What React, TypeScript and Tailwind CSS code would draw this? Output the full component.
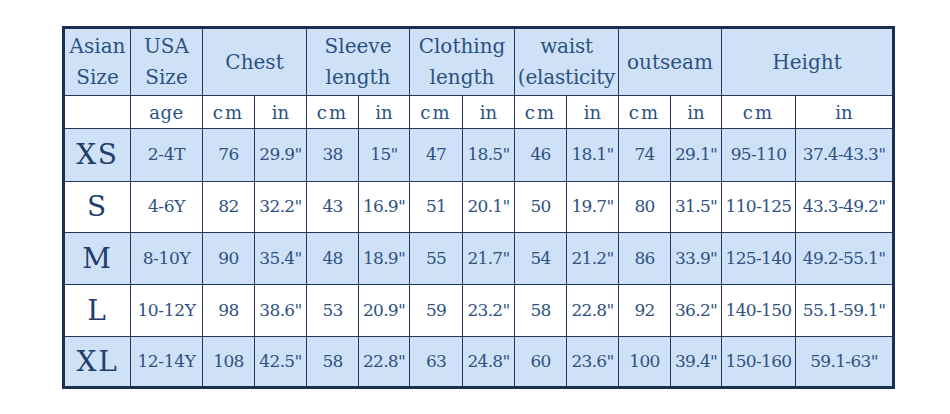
import React from "react"

const widths = [67, 72, 52, 52, 52, 51, 53, 52, 52, 52, 52, 51, 74, 98]

const rows = [
  { size: "XS", age: "2-4T", v: ["76", "29.9\"", "38", "15\"", "47", "18.5\"", "46", "18.1\"", "74", "29.1\"", "95-110", "37.4-43.3\""], h: "h-[53px]" },
  { size: "S", age: "4-6Y", v: ["82", "32.2\"", "43", "16.9\"", "51", "20.1\"", "50", "19.7\"", "80", "31.5\"", "110-125", "43.3-49.2\""], h: "h-[51px]" },
  { size: "M", age: "8-10Y", v: ["90", "35.4\"", "48", "18.9\"", "55", "21.7\"", "54", "21.2\"", "86", "33.9\"", "125-140", "49.2-55.1\""], h: "h-[52px]" },
  { size: "L", age: "10-12Y", v: ["98", "38.6\"", "53", "20.9\"", "59", "23.2\"", "58", "22.8\"", "92", "36.2\"", "140-150", "55.1-59.1\""], h: "h-[52px]" },
  { size: "XL", age: "12-14Y", v: ["108", "42.5\"", "58", "22.8\"", "63", "24.8\"", "60", "23.6\"", "100", "39.4\"", "150-160", "59.1-63\""], h: "h-[51px]" },
]

const cell = "border-[1.5px] border-[#22385c] text-center align-middle p-0"

export default function App() {
  return (
    <div className="w-[950px] h-[414px] bg-white pl-[62px] pt-[26px] font-['DejaVu_Serif',serif]">
      <table className="table-fixed border-collapse border-[3px] border-[#1b2f52] w-[831px]">
        <colgroup>
          {widths.map((w, i) => (
            <col key={i} style={{ width: w }} />
          ))}
        </colgroup>
        <tbody>
          {/* header */}
          <tr className="h-[68px] bg-[#cfe1f7] text-[#2b5282] text-[20px] leading-[31px]">
            <td className={cell}>Asian<br />Size</td>
            <td className={cell}>USA<br />Size</td>
            <td className={cell} colSpan={2}>Chest</td>
            <td className={cell} colSpan={2}>Sleeve<br />length</td>
            <td className={cell} colSpan={2}>Clothing<br />length</td>
            <td className={`${cell} whitespace-nowrap overflow-hidden tracking-[-0.01em]`} colSpan={2}>waist<br />(elasticity</td>
            <td className={cell} colSpan={2}>outseam</td>
            <td className={cell} colSpan={2}>Height</td>
          </tr>
          {/* units */}
          <tr className="h-[33px] bg-white text-[#2b5282] text-[18px]">
            <td className={cell}></td>
            <td className={`${cell} tracking-wide`}>age</td>
            {Array.from({ length: 12 }).map((_, i) => (
              <td key={i} className={`${cell} ${i % 2 === 0 ? "tracking-[0.12em]" : ""}`}>
                {i % 2 === 0 ? "cm" : "in"}
              </td>
            ))}
          </tr>
          {rows.map((r, ri) => (
            <tr key={r.size} className={`${r.h} ${ri % 2 === 0 ? "bg-[#cfe1f7]" : "bg-white"} text-[#2f5283] text-[17px]`}>
              <td className={`${cell} text-[28px] text-[#1f3e6c] tracking-[0.06em]`}>{r.size}</td>
              <td className={`${cell} whitespace-nowrap tracking-[-0.02em]`}>{r.age}</td>
              {r.v.map((v, i) => (
                <td key={i} className={`${cell} whitespace-nowrap tracking-[-0.04em]`}>{v}</td>
              ))}
            </tr>
          ))}
        </tbody>
      </table>
    </div>
  )
}
